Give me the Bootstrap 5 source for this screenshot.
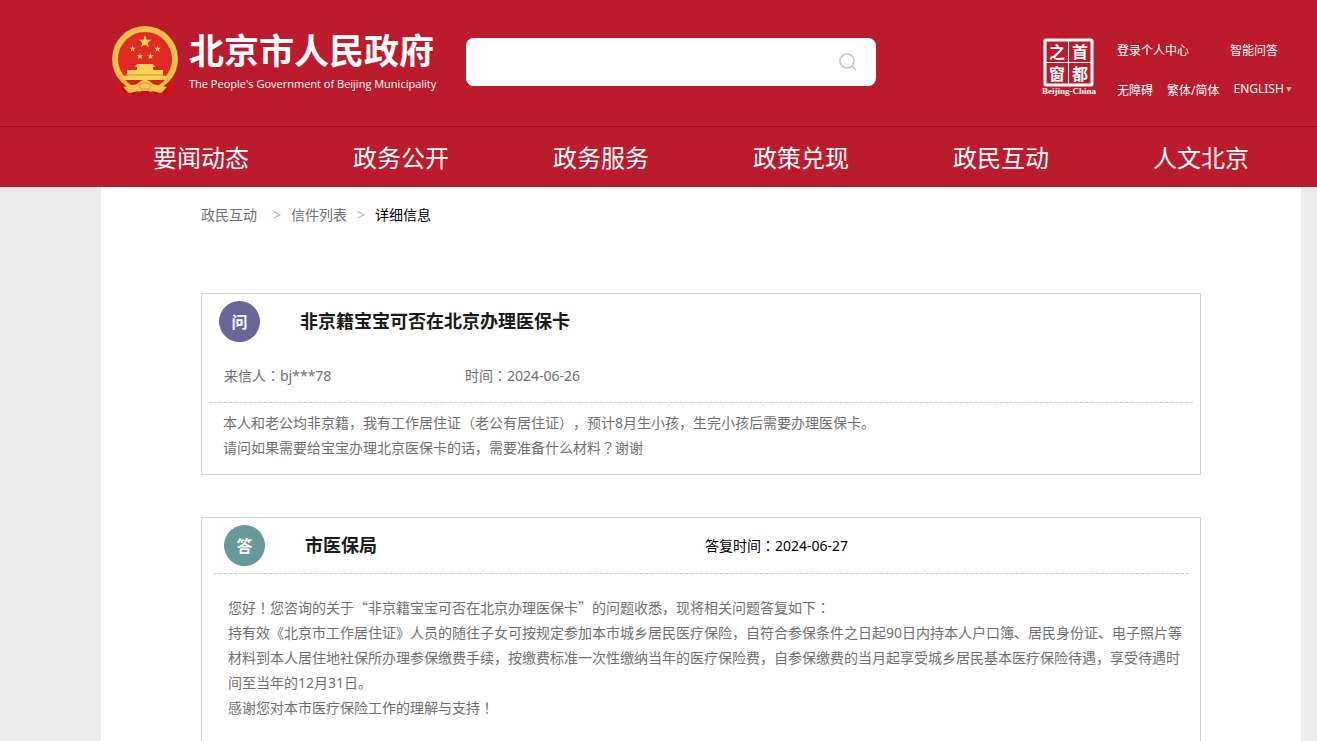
<!DOCTYPE html>
<html lang="zh-CN">
<head>
<meta charset="utf-8">
<meta name="viewport" content="width=device-width, initial-scale=1">
<title>北京市人民政府</title>
<link rel="stylesheet" href="https://cdn.jsdelivr.net/npm/bootstrap@5.3.0/dist/css/bootstrap.min.css">
<style>
body{background:#ebebeb;font-family:"Noto Sans","Noto Sans CJK SC",sans-serif;font-size:14px;line-height:20px;color:#707070;text-spacing-trim:space-all}
a{color:inherit;text-decoration:none}
.site-header{background:#bb1b2c;color:#fff}
.page-wrap{margin-left:101px;margin-right:16px}
.masthead{height:126px}
.brand-block{margin-left:10px;width:355px;padding-top:25px}
.brand-text{margin-left:10px}
.brand-name{font-size:35px;line-height:44px;font-weight:700;margin-top:4px}
.brand-sub{font-family:"Open Sans","Noto Sans",sans-serif;font-size:11px;line-height:16px;margin-top:3px}
.search-box{width:410px;height:48px;margin-top:38px;border-radius:8px;overflow:hidden;background:#fff}
.search-box input{box-shadow:none!important}
.search-box button{width:56px}
.seal{margin-top:37px;margin-right:20px}
.util-links{width:184px;font-size:12px;padding-top:41px}
.util-links button{font-size:12px;line-height:16px;color:#fff}
.util-row1{gap:41px}
.util-row2{margin-top:20px;gap:14px}
.caret-mark{font-size:6px;color:#efa58c;margin-left:2px}
.main-nav{border-top:1px solid #9a1220;height:61px}
.main-nav a{font-size:24px;line-height:62px;color:#fff}
.sheet{background:#fff;padding:18px 100px 0;min-height:calc(100vh - 187px)}
.crumb-sep{width:34px;text-align:center;opacity:.5}
.crumb-first{padding-left:6px}
.crumb-last{width:28px}
.letter{border:1px solid #d6d6d6}
.ask{margin-top:68px;padding:7px 7px 14px}
.reply{margin-top:42px;padding:7px 11px 24px 12px}
.round-tag{width:41px;height:41px;font-size:16px;font-weight:700;color:#fff;margin-left:10px}
.tag-ask{background:#666699}
.tag-reply{background:#669999}
.letter h1,.letter h2{font-size:18px;line-height:24px;font-weight:700;color:#1a1a1a;margin:0 0 2px}
.dash{border-bottom:1px dashed #ccc}
.ask-meta{margin-top:24px;padding:0 15px 16px}
.sender{width:241px}
.ask-text{padding:7px 14px 0;line-height:25px}
.reply-head{padding-bottom:7px}
.reply-text{padding:21px 0 0 14px;line-height:25px}
.reply-who{width:400px}
.cjk-mark{font-family:"Noto Sans CJK SC",sans-serif}
.mid-mark{font-family:"Noto Sans CJK TC",sans-serif;font-feature-settings:"locl" 0;line-height:1}
</style>
</head>
<body>
<header class="site-header">
  <div class="page-wrap masthead d-flex align-items-start">
    <a class="brand-block d-flex flex-shrink-0" href="#">
      <svg width="68" height="74" viewBox="0 0 68 74" aria-hidden="true">
        <path d="M8 47 5 66q8 6 17 5l12-4 12 4q9 1 17-5l-3-19z" fill="#d5151b"/>
        <path d="M11 62l4 7M57 62l-4 7M22 70l5-6M46 70l-5-6" stroke="#92101b" stroke-width="1.5"/>
        <circle cx="34" cy="34" r="33" fill="#f3c04b"/>
        <circle cx="34" cy="34" r="30" fill="none" stroke="#ecb441" stroke-dasharray="3 2"/>
        <circle cx="34" cy="34" r="27" fill="#e02a22"/>
        <g fill="#f9d25c">
          <path id="st" d="M34 10l1.600 4.700h5l-4 3 1.500 4.800-4.100-2.900-4.100 2.900 1.500-4.800-4-3h5z"/>
          <use href="#st" transform="translate(4.500 15.500) scale(.5)"/>
          <use href="#st" transform="translate(29.500 15.500) scale(.5)"/>
          <use href="#st" transform="translate(12 23) scale(.5)"/>
          <use href="#st" transform="translate(22.500 23) scale(.5)"/>
          <path d="M26 39h16l2 3h-2v3h-16v-3h-2zM16 45h36v6h-36zM12 51h44l-4 4h-36z"/>
        </g>
        <path d="M14 50h40" stroke="#d98d2b"/>
        <path d="M14 55h40l-6 5h-28z" fill="#d42420"/>
        <path d="M22 60q5-1 8-4l4-2 4 2q3 3 8 4l10 2-6 6-10-2-6 3-6-3-10 2-6-6z" fill="#f5c44d"/>
        <path d="M28 60q6-5 12 0l-2 4h-8z" fill="none" stroke="#dd9c35"/>
        <path d="M30 66h8l4 5h-16z" fill="#c6141c"/>
      </svg>
      <div class="brand-text text-nowrap">
        <div class="brand-name">北京市人民政府</div>
        <div class="brand-sub">The People's Government of Beijing Municipality</div>
      </div>
    </a>
    <form class="search-box d-flex flex-shrink-1">
      <input class="form-control border-0 rounded-0" type="text" aria-label="搜索">
      <button class="btn p-0 pe-2 pb-1 border-0" type="button" aria-label="搜索">
        <svg width="20" height="20" viewBox="0 0 20 20" fill="none" stroke="#c4c4c4" stroke-width="1.600"><circle cx="10" cy="9" r="7"/><path d="M15 14l4 4"/></svg>
      </button>
    </form>
    <a class="seal ms-auto flex-shrink-0" href="#" aria-label="首都之窗">
      <svg width="56" height="60" viewBox="0 0 56 60" fill="#fff">
        <rect x="4" y="3" width="47" height="45" rx="1" fill="none" stroke="#fff" stroke-width="3"/>
        <path d="M27.500 3v45M4 25.500h47" stroke="#fff"/>
        <g font-family="Noto Sans CJK SC, sans-serif" font-size="16" font-weight="700" text-anchor="middle">
          <text x="16" y="21">之</text><text x="39" y="21">首</text><text x="16" y="43">窗</text><text x="39" y="43">都</text>
        </g>
        <text x="28" y="57" font-family="Liberation Serif, serif" font-size="9" font-weight="700" text-anchor="middle">Beijing-China</text>
      </svg>
    </a>
    <div class="util-links flex-shrink-0 text-nowrap">
      <div class="util-row1 d-flex"><a href="#">登录个人中心</a><a href="#">智能问答</a></div>
      <div class="util-row2 d-flex align-items-start">
        <a href="#">无障碍</a><a href="#">繁体/简体</a><button class="btn p-0 border-0 d-flex" type="button">ENGLISH<span class="caret-mark">▼</span></button>
      </div>
    </div>
  </div>
  <nav class="main-nav">
    <div class="page-wrap d-flex text-center text-nowrap">
      <a class="col" href="#">要闻动态</a><a class="col" href="#">政务公开</a><a class="col" href="#">政务服务</a><a class="col" href="#">政策兑现</a><a class="col" href="#">政民互动</a><a class="col" href="#">人文北京</a>
    </div>
  </nav>
</header>
<main class="page-wrap sheet">
  <nav class="d-flex" aria-label="位置">
    <a href="#">政民互动</a><span class="crumb-sep crumb-first">&gt;</span><a href="#">信件列表</a><span class="crumb-sep crumb-last">&gt;</span><span class="text-black">详细信息</span>
  </nav>
  <article class="letter ask">
    <div class="d-flex align-items-center">
      <span class="round-tag tag-ask rounded-circle d-flex align-items-center justify-content-center me-4">问</span>
      <h1 class="ms-3">非京籍宝宝可否在北京办理医保卡</h1>
    </div>
    <div class="ask-meta dash d-flex">
      <div class="sender">来信人<span class="mid-mark">：</span>bj***78</div>
      <div>时间<span class="mid-mark">：</span>2024-06-26</div>
    </div>
    <div class="ask-text">
      本人和老公均非京籍，我有工作居住证（老公有居住证），预计8月生小孩，生完小孩后需要办理医保卡。<br>
      请问如果需要给宝宝办理北京医保卡的话，需要准备什么材料<span class="mid-mark">？</span>谢谢
    </div>
  </article>
  <article class="letter reply">
    <div class="reply-head dash d-flex align-items-center">
      <span class="round-tag tag-reply rounded-circle d-flex align-items-center justify-content-center me-4">答</span>
      <h2 class="reply-who ms-3">市医保局</h2>
      <div class="text-black">答复时间<span class="mid-mark">：</span>2024-06-27</div>
    </div>
    <div class="reply-text">
      您好<span class="mid-mark">！</span>您咨询的关于<span class="cjk-mark">“</span>非京籍宝宝可否在北京办理医保卡<span class="cjk-mark">”</span>的问题收悉，现将相关问题答复如下<span class="mid-mark">：</span><br>
      持有效《北京市工作居住证》人员的随往子女可按规定参加本市城乡居民医疗保险，自符合参保条件之日起90日内持本人户口簿、居民身份证、电子照片等材料到本人居住地社保所办理参保缴费手续，按缴费标准一次性缴纳当年的医疗保险费，自参保缴费的当月起享受城乡居民基本医疗保险待遇，享受待遇时间至当年的12月31日。<br>
      感谢您对本市医疗保险工作的理解与支持<span class="mid-mark">！</span>
    </div>
  </article>
</main>
<script src="https://cdn.jsdelivr.net/npm/bootstrap@5.3.0/dist/js/bootstrap.bundle.min.js"></script>
</body>
</html>
